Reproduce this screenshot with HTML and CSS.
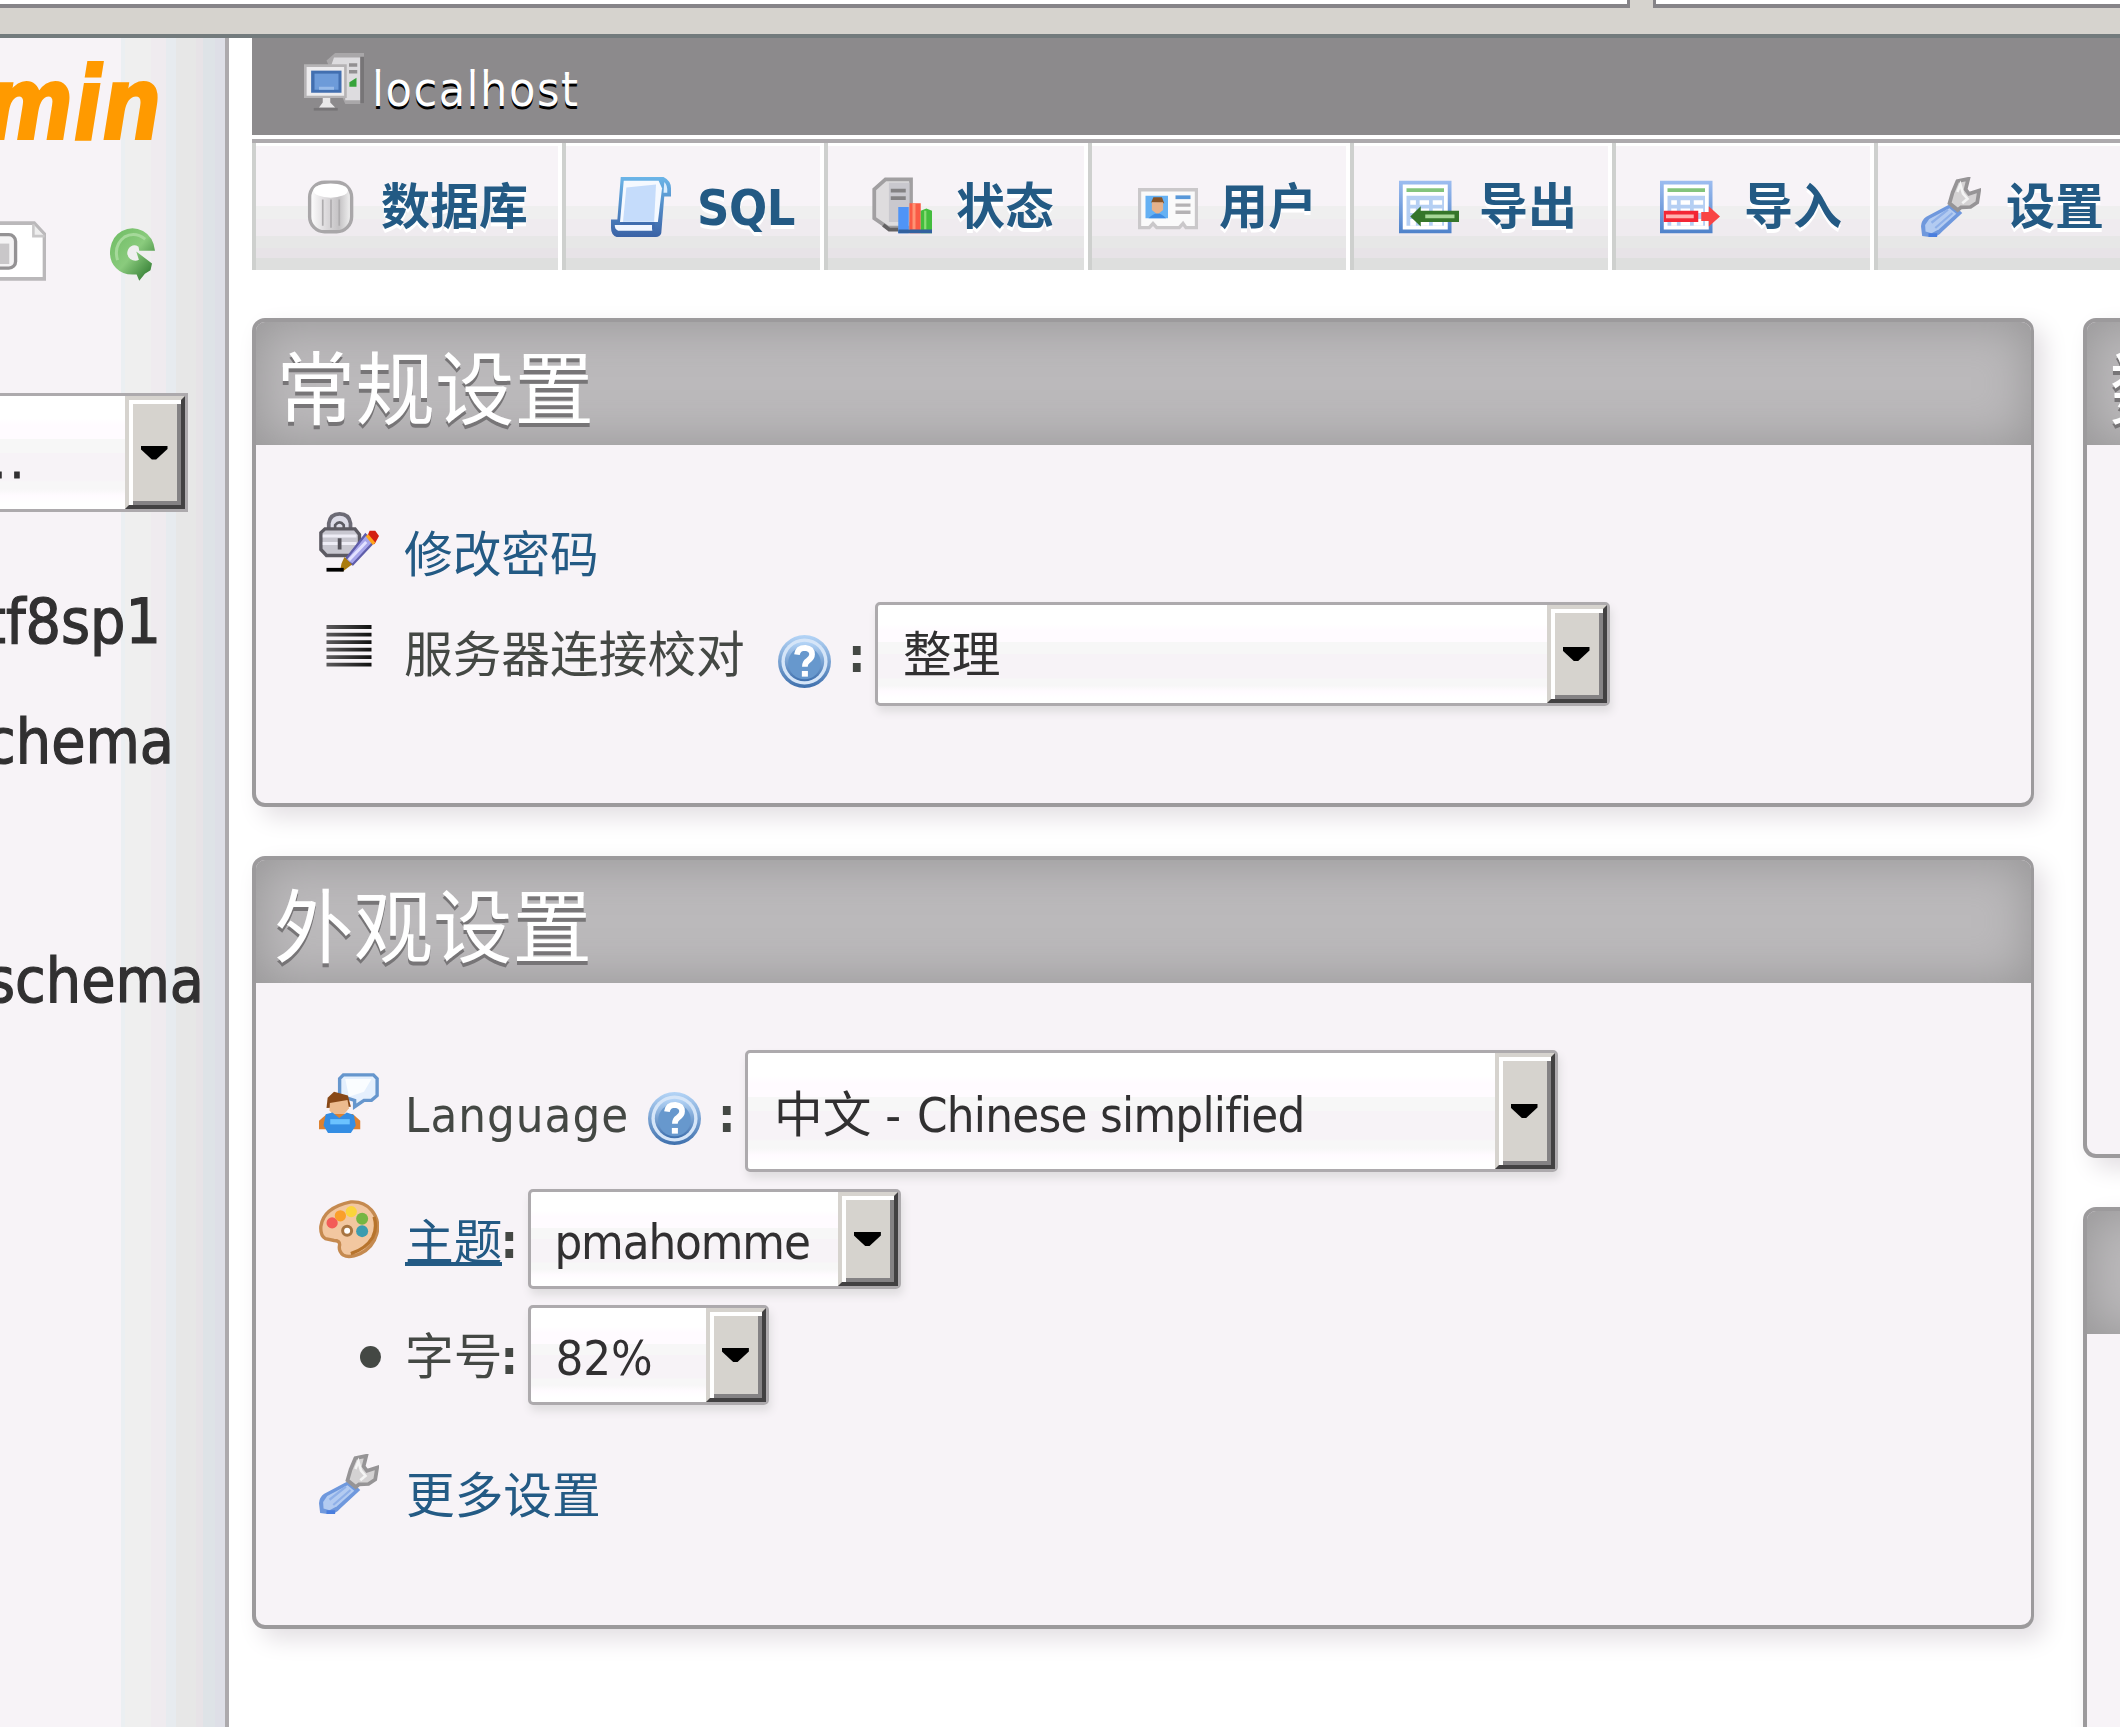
FILE: index.html
```html
<!DOCTYPE html>
<html lang="zh-CN">
<head>
<meta charset="utf-8">
<title>localhost | phpMyAdmin</title>
<link rel="stylesheet" href="styles.css">
</head>
<body>
<svg class="defs" width="0" height="0" aria-hidden="true">
  <defs>
    <linearGradient id="gCyl" x1="0" x2="1" y1="0" y2="0"><stop offset="0" stop-color="#fff"/><stop offset=".3" stop-color="#e4e2e4"/><stop offset=".7" stop-color="#c4c2c4"/><stop offset="1" stop-color="#f4f4f4"/></linearGradient>
    <linearGradient id="gBlue" x1="0" x2="0" y1="0" y2="1"><stop offset="0" stop-color="#6bb5e8"/><stop offset="1" stop-color="#3a62a5"/></linearGradient>
    <linearGradient id="gSheet" x1="0" x2="0" y1="0" y2="1"><stop offset="0" stop-color="#9dbdf0"/><stop offset="1" stop-color="#4f82ca"/></linearGradient>
    <linearGradient id="gHelp" x1="0" x2="0" y1="0" y2="1"><stop offset="0" stop-color="#b5d5f7"/><stop offset="1" stop-color="#3f70ad"/></linearGradient>
    <linearGradient id="gLine" x1="0" x2="1" y1="0" y2="0"><stop offset="0" stop-color="#5c5a5c"/><stop offset="1" stop-color="#111"/></linearGradient>
    <linearGradient id="gGreen" x1="0" x2="1" y1="0" y2="1"><stop offset="0" stop-color="#6dbb62"/><stop offset=".5" stop-color="#8acb7d"/><stop offset="1" stop-color="#1f6b22"/></linearGradient>
    <symbol id="wrench" viewBox="0 0 16 16">
      <path d="M8.2 7 11 9.6 5.6 14.6Q4.6 16 2.3 16L.3 15.7 0 13.1Q.1 11.5 1.4 10.6Z" fill="#6f98dd"/>
      <path d="M7.6 8.3 9.4 9.8 4.8 13.9 2.8 15 1.2 14.5 1.1 12.8 2.2 11.2Z" fill="#b3cbf1"/>
      <path d="M2.8 12.2 7.2 8.7M3.8 13.6 8.4 9.6" stroke="#8fb0e8" stroke-width=".6"/>
      <path d="M2 15.5H4.3" stroke="#4a7ede"/>
      <path d="M8.4 4.2 9.7 1.1 12.6.5 11.9 3.3 12.8 4.5 15.5 3.6 15 6.8 13.2 8 10.7 8.1 9.8 8.8 7.6 7Z" fill="#d4d2d3" stroke="#969496"/>
      <path d="M9.7 4 10.5 2 11.2 4.4 12.4 5.8 11 7" fill="none" stroke="#f4f4f4" stroke-width=".7"/>
    </symbol>
    <symbol id="help" viewBox="0 0 14 14">
      <circle cx="7" cy="7" r="7" fill="url(#gHelp)"/>
      <circle cx="7" cy="7" r="6.1" fill="#d5e5f8"/>
      <circle cx="7" cy="7" r="5.2" fill="url(#gHelp)"/>
      <circle cx="7" cy="7.4" r="4.3" fill="#6798cd"/>
      <path d="M5 5.2Q5.2 3.4 7.2 3.4 9 3.6 9 5.1 9 6.1 7.9 6.8 7.1 7.3 7.1 8.4" fill="none" stroke="#fff" stroke-width="1.5"/>
      <path d="M6.3 9.5H7.9V11H6.3Z" fill="#fff"/>
    </symbol>
    <symbol id="sheet" viewBox="0 0 16 16">
      <path d="M0 1H14V15H0Z" fill="url(#gSheet)"/>
      <path d="M1 2H13V14H1Z" fill="#fff"/>
      <path d="M2 3H12V4H2Z" fill="#83c47c"/>
      <path d="M2 5H12V13H2Z" fill="#b5cff3"/>
      <path d="M3 6.2H4.5V7.4H3ZM5.5 6.2H8V7.4H5.5ZM9 6.2H11.5V7.4H9ZM3 8.4H4.5V9.6H3ZM5.5 8.4H8V9.6H5.5ZM9 8.4H11.5V9.6H9ZM3 11.2H4.5V13H3ZM5.5 11.2H8V13H5.5ZM9 11.2H11.5V13H9Z" fill="#fff"/>
    </symbol>
  </defs>
</svg>

<div class="browser-edge">
  <div class="field field-left"></div>
  <div class="field field-right"></div>
</div>

<div class="page">
  <aside class="sidebar">
    <div class="logo"><span>min</span></div>
    <div class="side-icons">
      <svg class="doc" viewBox="0 0 12.4 16"><path d="M-4 .5H9.2L12 3.5V15.5H-4Z" fill="#fff" stroke="#bab8ba"/><path d="M9 .8V4H12" fill="#eee" stroke="#c9c8c9" stroke-width=".7"/><rect x="-5" y="3.6" width="9.2" height="9" rx="1.8" fill="#f4f3f4" stroke="#949294" stroke-width=".9"/><path d="M0 6H2.5V11.5H0Z" fill="#c9c7c9"/></svg>
      <svg class="reload" viewBox="0 0 12 14"><path d="M12 6H7.8L7.6 4.9Q6 4 4.9 5.5 4.1 7 5.4 8.2 6.6 9 7.7 8.4L7 6.2 11.2 9.4 10.8 11.2 9.3 12.1 7.8 14 7.1 12.3Q3.6 12.7 1.6 10.6-.4 8.6 .1 5.3.7 2 3.2.7 6-.7 8.8.7 11.6 2.2 12 6Z" fill="url(#gGreen)"/><path d="M2 8.5Q.9 4.5 3.9 2.3 6.7.8 9.4 2.9" fill="none" stroke="#a5d99a" stroke-width=".8"/></svg>
    </div>
    <div class="select side-select"><span class="value">..</span><i class="drop"></i></div>
    <ul class="db-list">
      <li class="db-a">tf8sp1</li>
      <li class="db-b">chema</li>
      <li class="db-c">schema</li>
    </ul>
  </aside>

  <main class="main">
    <header class="server">
      <svg class="icon" viewBox="0 0 16 16"><path d="M6 2 8.3 0H16V13.6H11Z" fill="#a9a7a9"/><path d="M8 1.2H15V12.6H11V4H7Z" fill="#dddcdf"/><path d="M12 3.2H14.2M12 5H14.2" stroke="#929092" stroke-width=".9"/><path d="M12.1 7.8 14 6.6V9H12.1Z" fill="#36a33b"/><path d="M15.5 1V13.5" stroke="#777577"/><path d="M0 3H11.4V12H0Z" fill="#b5b3b5"/><path d="M.7 3.7H10.7V11.4H.7Z" fill="#edecee"/><path d="M1.9 4.7H10V10.6H1.9Z" fill="#426fb0"/><path d="M2.8 5.5H9.2V9.8H2.8Z" fill="#6d9bd9"/><path d="M4 9H8V9.8H4Z" fill="#98bbe9"/><path d="M5 12H7V13.2L8.3 14.5H4L5 13.2Z" fill="#e9e8e9"/><path d="M2.6 15H9" stroke="#777577" stroke-width=".7"/></svg>
      <span class="server-name">localhost</span>
    </header>

    <nav class="tabs">
      <a class="tab w1"><svg class="icon" viewBox="0 0 16 16"><rect x="2.3" y="1.4" width="11.2" height="13.2" rx="4" fill="url(#gCyl)" stroke="#a9a7a9" stroke-width=".9"/><ellipse cx="7.9" cy="3.6" rx="4.6" ry="1.9" fill="#fff"/><path d="M5.8 6V13M8 6V13.5M10.2 6V13" stroke="#aeacae" stroke-width=".45"/></svg><span>数据库</span></a>
      <a class="tab w2"><svg class="icon" viewBox="0 0 16 16"><path d="M2.6 0H14Q16 1 16 3V5.2H14.2L13.4 15Q13 16 12 16H1.5Q0 15.4 0 13.5V11.3H1.7Z" fill="url(#gBlue)"/><path d="M3.4 1H12.7L13.6 3 12.5 12H2.4Z" fill="#f5f9ff"/><path d="M4.1 2.8 12 2 11.5 11.9H3.2Z" fill="#c5dcfb"/><path d="M14.2 1.3Q15.2 2.2 15 4.2H14Z" fill="#d9edff"/><path d="M1 12.8H11V14.3H1.9Q1 14 1 12.8Z" fill="#f1f6ff"/><path d="M2.5 12.4H11.3V14" fill="none" stroke="#3f6cae" stroke-width=".7"/></svg><span class="latin">SQL</span></a>
      <a class="tab w3"><svg class="icon" viewBox="0 0 16 16"><path d="M3.6.6H10.4V13.5H4.2L.6 11V3.3Z" fill="#dedcde" stroke="#a19fa1"/><path d="M4.5 1.5H10V12H4.5Z" fill="#c9c8ce"/><path d="M5 3.6H9M5 5.6H9" stroke="#848284" stroke-width="1"/><path d="M3 12.8 4.6 14H7" stroke="#636163" fill="none"/><path d="M7 8H9.8V15H7Z" fill="#4f94f7"/><path d="M10 7H13V15H10Z" fill="#fa5b45"/><path d="M10.8 7H11.6V14H10.8Z" fill="#ff9475"/><path d="M13 9 14.5 8.4 16 9V15H13Z" fill="#44bd3e"/><path d="M13.9 9H14.5V14H13.9Z" fill="#8add77"/><path d="M7 14H16V15H7Z" fill="#32619f"/></svg><span>状态</span></a>
      <a class="tab w4"><svg class="icon" viewBox="0 0 16 16"><path d="M.4 3.4H15.6V13.5H12.8L12 12.4 11 13.5H5L4 12.4 3 13.5H.4Z" fill="#fafafa" stroke="#cac8ca" stroke-width=".9"/><path d="M2 5H8V11H2Z" fill="#65b1f3"/><path d="M3.5 6.8 4.1 5.4H6.4L7 7Z" fill="#885326"/><path d="M3.7 6.7H6.7V8.8L5.2 10 3.7 8.8Z" fill="#e5b28c"/><path d="M2.8 11Q5.2 8.4 7.5 11Z" fill="#3d8de5"/><path d="M10 5.4H14" stroke="#5898d9" stroke-width="1"/><path d="M10 7.5H14M10 9.4H14" stroke="#b4b2b4" stroke-width=".9"/></svg><span>用户</span></a>
      <a class="tab w5"><svg class="icon" viewBox="0 0 16 16"><use href="#sheet" width="16" height="16"/><path d="M3 10.5 5.8 7.8V9H16V12H5.8V13.2Z" fill="#35762a"/><path d="M7 10H14.8V11H7Z" fill="#a6d697"/></svg><span>导出</span></a>
      <a class="tab w6"><svg class="icon" viewBox="0 0 16 16"><use href="#sheet" width="16" height="16"/><path d="M1 9H10.2V12H1Z" fill="#f32635"/><path d="M1.6 10H9V11H1.6Z" fill="#ffb0b0"/><path d="M11 9.3H13V7.8L16 10.5 13 13.2V11.7H11Z" fill="#f94444"/></svg><span>导入</span></a>
      <a class="tab w7"><svg class="icon"><use href="#wrench"/></svg><span>设置</span></a>
    </nav>

    <div class="columns">
      <div class="col">
        <section class="panel general">
          <h2>常规设置</h2>
          <div class="row row-pass">
            <svg class="icon" viewBox="0 0 16 16"><path d="M2.6 5V3Q3 .5 5.5.5T8.4 3V5" fill="#dddce8" stroke="#6c6a75"/><path d="M4.3 5V3.5Q5.5 2 6.6 3.5V5" fill="none" stroke="#5c5b63" stroke-width=".7"/><path d="M1.6 4.5H9.6L10.8 6V10L8.8 11.6H2L.5 10V5.5Z" fill="#c8c7d0" stroke="#5c5a62" stroke-width=".9"/><path d="M1 6.4H10M1 8.4H10" stroke="#eeedf6" stroke-width=".8"/><path d="M5.5 7V10" stroke="#55535b"/><path d="M12.4 6 14.6 8 9 14 6.8 13Z" fill="#a7a5ea" stroke="#5f5daa" stroke-width=".6"/><path d="M12.6 8 8 12.8" stroke="#e2e1ff" stroke-width=".8"/><path d="M13.5 5H15L16 6.4 14.8 8.6 12.8 6.6Z" fill="#d42113"/><path d="M12.8 6.2 14.7 8.5" stroke="#ffa51c" stroke-width=".9"/><path d="M6.8 12 8.8 14 6.4 15.8H5.6L6 13.7Z" fill="#aa7b0c"/><path d="M2 15.4H6.6" stroke="#000" stroke-width="1"/></svg>
            <a class="link">修改密码</a>
          </div>
          <div class="row row-coll">
            <svg class="icon lines" viewBox="0 0 16 16"><path d="M2 .5H14V1.6H2ZM2 2.6H14V3.6H2ZM2 4.6H14V5.6H2ZM2 6.6H14V7.6H2ZM2 8.6H14V9.6H2ZM2 10.6H14V11.6H2Z" fill="url(#gLine)"/></svg>
            <span class="label">服务器连接校对</span>
            <svg class="help"><use href="#help"/></svg><b class="colon">:</b>
            <div class="select s-coll"><span class="value">整理</span><i class="drop"></i></div>
          </div>
        </section>

        <section class="panel appearance">
          <h2 class="shifted">外观设置</h2>
          <div class="row row-lang">
            <svg class="icon" viewBox="0 0 16 16"><path d="M6.5.5H14.5L15.5 1.5V6L14 7.3H12L9.5 9V7.3L5.5 6V1.5Z" fill="#e5f0fd" stroke="#6696cd" stroke-width=".9"/><path d="M7 1.6H14L12 5 8 6.3Z" fill="#fafdff"/><path d="M2 9.3 2.3 6.6 4 5 7.7 6 8.5 9Z" fill="#884817"/><path d="M2.9 8 7.6 7.2 8 9.4 6.4 11.4H4L2.8 10Z" fill="#edbb8e"/><path d="M0 15V12.7L2.1 10.9H9L11 12.7V15Z" fill="#dd8130"/><path d="M1.8 11 3.6 10.5 5.4 12 7.4 10.5 9.3 11.2 9.8 14 8.5 16H2.4L1.2 14Z" fill="#348de3"/><path d="M3 13H8.2" stroke="#6bc2ff" stroke-width="1.4"/></svg>
            <span class="label l-lang">Language</span>
            <svg class="help"><use href="#help"/></svg><b class="colon">:</b>
            <div class="select s-lang"><span class="value">中文 - <span class="t-lang">Chinese simplified</span></span><i class="drop"></i></div>
          </div>
          <div class="row row-theme">
            <svg class="icon" viewBox="0 0 16 16"><path d="M8.5.5Q12 .3 14 2.7 16.3 5.5 15.4 9 14.4 12.7 11 14.3 8 15.6 6.5 14.7 5.1 13.6 5.5 12 5.6 10.8 4 10.8L1.7 10.3Q.3 9.5.5 7 1.2 2 8.5.5Z" fill="#f2c7a0" stroke="#c58a50" stroke-width=".9"/><path d="M14.7 4.5Q15.6 7.5 14.3 10 12.5 13 8.5 14.3" fill="none" stroke="#b7742d" stroke-width=".9"/><circle cx="3.5" cy="6.1" r="1.5" fill="#f35c58"/><circle cx="5.7" cy="4.2" r="1.5" fill="#fa9f2b"/><circle cx="8.6" cy="3.1" r="1.5" fill="#fbd43b"/><circle cx="11.5" cy="5" r="1.6" fill="#76b643"/><circle cx="11.5" cy="8.3" r="1.6" fill="#3b9caf"/><circle cx="7.5" cy="8.2" r="1.2" fill="#fff" stroke="#a87541" stroke-width=".8"/></svg>
            <span class="label"><a class="link under">主题</a></span><b class="colon">:</b>
            <div class="select s-theme"><span class="value">pmahomme</span><i class="drop"></i></div>
          </div>
          <div class="row row-size">
            <i class="bullet"></i>
            <span class="label">字号</span><b class="colon">:</b>
            <div class="select s-size"><span class="value">82%</span><i class="drop"></i></div>
          </div>
          <div class="row row-more">
            <svg class="icon"><use href="#wrench"/></svg>
            <a class="link">更多设置</a>
          </div>
        </section>
      </div>
      <div class="col col-right">
        <section class="panel db-server"><h2>数</h2></section>
        <section class="panel web-server"><h2></h2></section>
      </div>
    </div>
  </main>
</div>
</body>
</html>
```
FILE: styles.css
```css
* { box-sizing: border-box; }
body {
  margin: 0;
  width: 2120px;
  height: 1727px;
  overflow: hidden;
  background: #fff;
  color: #444844;
  font-family: "DejaVu Sans Condensed", "Noto Sans CJK SC", sans-serif;
  font-size: 48.7px;
  line-height: 60px;
}
.defs { display: block; position: absolute; }
.icon { width: 60px; height: 60px; flex: none; }

/* bottom edge of the browser toolbar */
.browser-edge {
  height: 38px;
  display: flex;
  justify-content: space-between;
  background: #d6d3ce;
  border-bottom: 4px solid #737b7d;
}
.field { height: 8px; background: #fff; border-bottom: 4px solid #868488; }
.field-left { width: 1630px; border-right: 3px solid #868488; }
.field-right { width: 467px; border-left: 3px solid #868488; }

.page { display: flex; height: 1689px; }

/* navigation column */
.sidebar {
  width: 229px;
  flex: none;
  overflow: hidden;
  border-right: 4px solid #adaaad;
  background: linear-gradient(90deg, #f7f3f7 121px, #ebeff2 121px 125px, #efefef 125px 151px, #efebef 151px 166px, #e7ebef 166px 176px, #e7e7e7 176px 196px, #e7e3e7 196px 203px, #dee3e7 203px 215px, #dedfe7 215px);
}
.logo {
  height: 183px;
  display: flex;
  justify-content: flex-end;
  padding: 16px 63px 0 0;
  font: italic bold 101px/100px "DejaVu Sans Condensed", sans-serif;
  color: #ff9a00;
}
.logo span { flex: none; transform: scaleX(.92); transform-origin: 100% 50%; -webkit-text-stroke: 2px #ff9a00; }
.side-icons { height: 172px; display: flex; }
.doc { width: 46px; height: 60px; }
.reload { width: 45px; height: 53px; margin: 7px 0 0 64px; }
.select.side-select { width: 188px; height: 119px; border-left: 0; border-radius: 0; box-shadow: none; }
.side-select.select .value { padding-left: 0; margin-left: -8px; letter-spacing: 4px; transform: translateY(8px); -webkit-text-stroke: 1px #313031; }
.db-list {
  list-style: none;
  margin: 0;
  padding: 70px 0 0;
  color: #313031;
  font-size: 62px;
  line-height: 80px;
  -webkit-text-stroke: 1.2px #313031;
}
.db-list li { display: flex; justify-content: flex-end; height: 119.5px; }
.db-a { padding-right: 64px; }
.db-b { padding-right: 51px; }
.db-list .db-c { padding-right: 21px; margin-top: 119.5px; }

/* server bar and tabs */
.main { flex: 1; min-width: 0; padding-left: 23px; overflow: hidden; }
.server {
  height: 97px;
  padding: 15px 0 0 52px;
  display: flex;
  align-items: flex-start;
  background: #8c8a8c;
}
.server-name { margin: 6px 0 0 8px; color: #fff; font-size: 48px; letter-spacing: 1.5px; text-shadow: 0 3px 0 #000; }
.tabs { display: flex; margin-top: 4px; border-top: 4px solid #adaaad; width: 1883px; }
.tab {
  display: flex;
  align-items: center;
  flex: none;
  height: 127px;
  padding-left: 45px;
  gap: 21px;
  border-left: 4px solid #ced0ce;
  border-right: 4px solid #fff;
  background: linear-gradient(#fff 3px, #f7f3f7 3px 63px, #efefef 63px 76px, #efebef 76px 93px, #e7e7e7 93px 105px, #e7e3e7 105px 115px, #dedfde 115px);
  color: #235a84;
  font-weight: bold;
  font-size: 49px;
  text-shadow: 0 4px 0 #fff;
}
.tab span { white-space: nowrap; padding-top: 2px; }
.w1 { width: 310px; gap: 20px; }
.w2 { width: 262px; gap: 26px; }
.w3 { width: 264px; gap: 24px; padding-left: 44px; }
.w4, .w5, .w6 { width: 262px; }
.w4 .icon { margin-left: 1px; }
.w5 { gap: 20px; }
.w6 { gap: 24px; padding-left: 44px; }
.w7 { width: 261px; gap: 25px; padding-left: 43px; }
.tab .latin { font-size: 50px; letter-spacing: -.5px; }

/* panels */
.columns { display: flex; gap: 49px; margin-top: 48px; width: 2000px; }
.col { width: 1782px; flex: none; }
.col-right { width: 700px; }
.panel {
  border: 4px solid #9c9a9c;
  border-width: 4px 3px 4px 4px;
  border-radius: 13px;
  background: #f7f3f7;
  box-shadow: 10px 10px 24px #e2dee2;
  margin-bottom: 49px;
  overflow: hidden;
}
.general { height: 489px; }
.appearance { height: 773px; }
.db-server { height: 840px; }
.web-server { height: 700px; }
.panel h2 {
  margin: 0;
  height: 123px;
  padding: 0 0 0 20px;
  background: #bbb9bb;
  box-shadow: inset 0 0 50px #959495;
  color: #fff;
  font-weight: 400;
  font-size: 79.5px;
  line-height: 137px;
  text-shadow: 0 4px 0 #777577;
  white-space: nowrap;
}
.panel h2.shifted { padding-left: 18px; }
.col-right h2 { padding-left: 22px; }

/* setting rows */
.row { display: flex; align-items: center; padding-left: 63px; }
.label, .link { margin-left: 25px; white-space: nowrap; }
.link { color: #235a84; }
.label .link { margin-left: 0; }
.under { border-bottom: 4px solid #235a84; display: block; height: 53px; }
.help { width: 53px; height: 53px; flex: none; margin: 14px 0 0; }
.colon { font-weight: bold; width: 16px; flex: none; }
.row-pass { height: 60px; margin-top: 67px; }
.row-pass .link { padding-top: 26px; }
.row-coll { height: 104px; margin-top: 30px; }
.lines { margin-top: -3px; }
.row-coll .label { width: 341px; padding-top: 2px; }
.row-coll .help { margin-left: 33px; }
.row-coll .colon { margin-left: 17px; padding-top: 2px; }
.row-lang { height: 122px; margin-top: 67px; }
.row-lang .icon { margin-top: -16px; }
.row-lang .label { width: 222px; margin-left: 26px; padding-top: 8px; letter-spacing: 1px; }
.row-lang .help { margin-left: 21px; }
.row-lang .colon { margin-left: 17px; padding-top: 8px; }
.row-theme { height: 100px; margin-top: 17px; }
.row-theme .icon { margin-top: -19px; }
.row-theme .label { margin-left: 26px; padding-top: 1px; }
.row-theme .colon, .row-size .colon { margin-left: -2px; padding-top: 4px; }
.row-size { height: 100px; margin-top: 16px; }
.bullet { width: 21px; height: 22px; margin: 4px 0 0 41px; border-radius: 50%; background: #444844; }
.row-size .label { margin-left: 24px; padding-top: 3px; }
.row-more { height: 60px; margin-top: 49px; }
.row-more .link { padding-top: 24px; margin-left: 27px; }

/* drop-down fields */
.select {
  display: flex;
  justify-content: space-between;
  flex: none;
  border: 3px solid #adaaad;
  border-radius: 5px;
  background: linear-gradient(#fff 20%, #fffbff 26% 38%, #f7f7f7 38% 50%, #f7f3f7 50% 74%, #f7f7f7 76% 82%, #fffbff 88%, #fff 95%);
  box-shadow: 2px 6px 8px #dfdddf;
  color: #313031;
}
.select .value { align-self: center; padding-left: 25px; white-space: nowrap; }
.drop {
  width: 60px;
  background: #d6d3ce;
  border: 4px solid;
  border-color: #d6d3ce #424142 #424142 #d6d3ce;
  box-shadow: inset 4px 4px 0 #fff, inset -4px -4px 0 #848284;
  display: flex;
  align-items: center;
  justify-content: center;
}
.drop::before {
  content: "";
  width: 27px;
  height: 14px;
  margin-right: 2px;
  background: #000;
  clip-path: polygon(0 0, 100% 0, 100% 25%, 58% 100%, 42% 100%, 0 25%);
}
.s-coll { width: 735px; height: 104px; margin-left: 11px; }
.s-coll .value { padding-top: 2px; }
.s-lang { width: 813px; height: 122px; margin-left: 11px; }
.s-lang .value { padding-top: 8px; padding-left: 26px; }
.t-lang { margin-left: 2px; letter-spacing: -.75px; }
.s-theme { width: 373px; height: 100px; margin-left: 12px; }
.s-theme .value { padding-top: 5px; letter-spacing: -1.1px; padding-left: 23px; }
.s-size { width: 241px; height: 100px; margin-left: 12px; }
.s-size .value { padding-top: 5px; padding-left: 24px; }
```
